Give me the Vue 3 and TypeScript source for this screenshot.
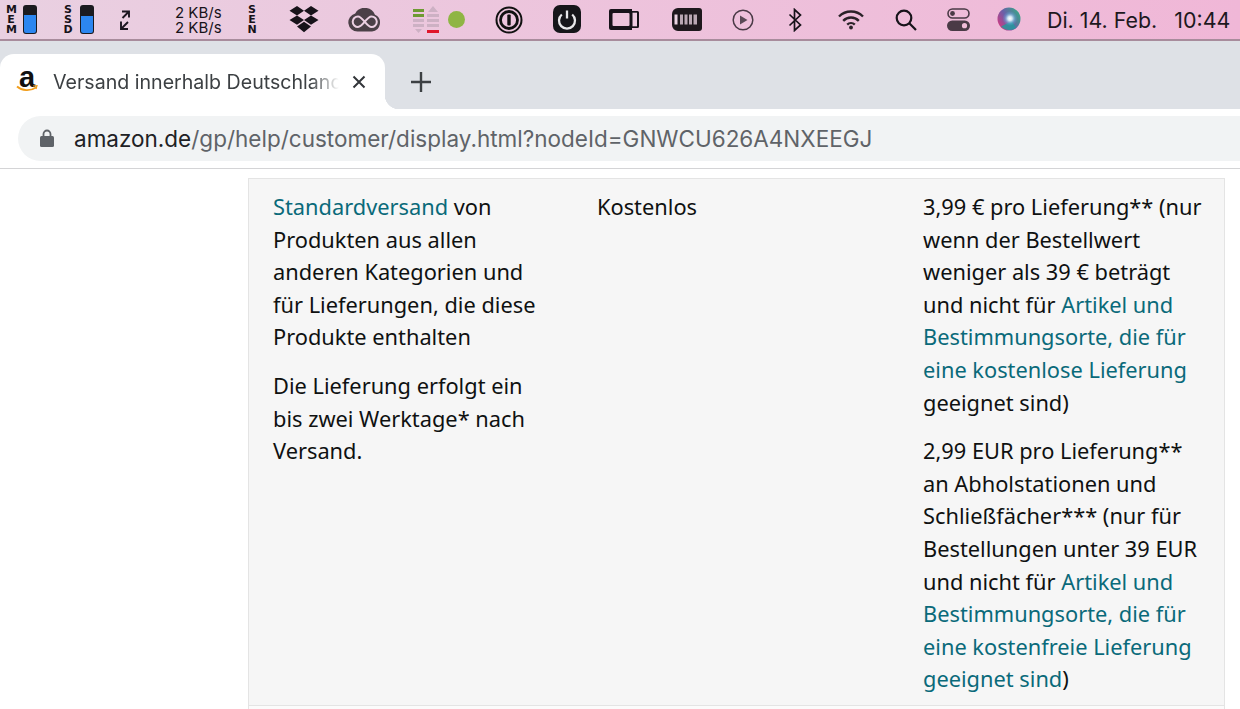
<script setup lang="ts">
const labels: Record<string, string> = { mem: 'MEM', ssd: 'SSD', sen: 'SEN' };
</script>

<template>
  <div class="screen">
    <header class="menubar">
      <div class="stack w-mem">{{ labels.mem }}</div>
      <div class="meter"><i class="fill-mem"></i></div>
      <div class="stack w-ssd">{{ labels.ssd }}</div>
      <div class="meter"><i class="fill-ssd"></i></div>
      <svg class="ic arrows" width="12" height="20" viewBox="0 0 12 20" fill="none" stroke="#1c1620" stroke-width="1.9">
        <path d="M3 1.5h7v6M10 1.5L3.5 8M9 12L2.500 18.500M2 11.500v7.500h7" />
      </svg>
      <div class="net">2 KB/s<br />2 KB/s</div>
      <div class="stack w-sen">{{ labels.sen }}</div>
      <svg class="ic dropbox" width="30" height="27" viewBox="0 0 30 27" fill="#17131a">
        <path d="M8 0l7 4.700-7 4.700-7.500-4.700zM22 0l7.500 4.700-7.500 4.700-7-4.700zM.5 14L8 9.400l7 4.600-7 4.800zM29.500 14L22 9.400 15 14l7 4.800zM8 20.500l7-4.700 7 4.700-7 5.800z" />
      </svg>
      <svg class="ic cc" width="33" height="24" viewBox="0 0 33 24" fill="none">
        <path d="M9.500 23.500a9.200 9.200 0 0 1-2.300-18.100A11 11 0 0 1 27 6.800 8.800 8.800 0 0 1 24 23.500z" fill="#4b4047" />
        <path d="M10 19a5.300 5.300 0 0 1 0-10.600c4.800 0 8.500 10.600 13.500 10.600a5.300 5.300 0 0 0 0-10.600C18.500 8.400 15 19 10 19z" stroke="#ecd0e2" stroke-width="2" />
      </svg>
      <svg class="ic bars" width="27" height="28" viewBox="0 0 27 28">
        <g fill="#cdb1c4">
          <rect x="0" y="8" width="11" height="3" fill="#6e9a32" />
          <rect x="0" y="3" width="11" height="3" fill="#6e9a32" />
          <path d="M0 13h11v3H0zM0 18h11v3H0zM2 23h7l-3.500 4zM14 8h12v3H14zM14 13h12v3H14zM14 18h12v3H14zM20 0l5 6H15z" />
          <rect x="14" y="24" width="12" height="3" fill="#e0162b" />
        </g>
      </svg>
      <span class="dot"></span>
      <svg class="ic onepass" width="28" height="28" viewBox="0 0 28 28">
        <circle cx="14" cy="14" r="12.500" fill="none" stroke="#111" stroke-width="2" />
        <circle cx="14" cy="14" r="8.500" fill="none" stroke="#111" stroke-width="2.800" />
        <rect x="12.300" y="8.500" width="3.400" height="11" rx="1" fill="#111" />
      </svg>
      <svg class="ic power" width="28" height="28" viewBox="0 0 28 28">
        <rect width="28" height="28" rx="7" fill="#16161a" />
        <path d="M8.800 9.500a8 8 0 1 0 10.400 0" fill="none" stroke="#e8e8ea" stroke-width="2.300" />
        <path d="M14 5.500v8" stroke="#e8e8ea" stroke-width="2.300" />
      </svg>
      <svg class="ic video" width="30" height="21" viewBox="0 0 30 21">
        <path d="M2 0h21v2h5.500a1.500 1.500 0 0 1 1.500 1.500v14a1.500 1.500 0 0 1-1.500 1.500H23v2H2a2 2 0 0 1-2-2V2a2 2 0 0 1 2-2z" fill="#17131a" />
        <rect x="3.500" y="4" width="17" height="13" rx="1" fill="#ecc4dc" />
        <rect x="23.500" y="3.700" width="4.500" height="13.600" fill="#efcde2" />
      </svg>
      <svg class="ic batt" width="30" height="23" viewBox="0 0 30 23">
        <path d="M6 0h21a3 3 0 0 1 3 3v17a3 3 0 0 1-3 3H6a6 6 0 0 1-6-6V6a6 6 0 0 1 6-6z" fill="#1e181d" />
        <path d="M2.500 6.500h3v10h-3z" fill="#ead3e2" />
        <path d="M8 6.500h3v10H8zM12.500 6.500h3v10h-3zM17 6.500h3v10h-3zM21.500 6.500h3.500v10h-3.500z" fill="#b9a7b3" />
      </svg>
      <svg class="ic play" width="22" height="22" viewBox="0 0 22 22">
        <circle cx="11" cy="11" r="9.800" fill="none" stroke="#4a3a46" stroke-width="1.500" />
        <path d="M8 6.500l7.500 4.500L8 15.500z" fill="#5a4a56" />
      </svg>
      <svg class="ic bt" width="14" height="24" viewBox="0 0 14 24" fill="none" stroke="#17131a" stroke-width="1.700">
        <path d="M1.500 6.500l11 10.500-6 5.500V1.500l6 5.500-11 10.500" />
      </svg>
      <svg class="ic wifi" width="26" height="20" viewBox="0 0 26 20" fill="none" stroke="#2a2228" stroke-width="2.400">
        <path d="M1 6.500a17 17 0 0 1 24 0M5.200 10.800a11 11 0 0 1 15.600 0M9.200 14.600a5.500 5.500 0 0 1 7.600 0" />
        <circle cx="13" cy="17.500" r="1.900" fill="#2a2228" stroke="none" />
      </svg>
      <svg class="ic search" width="22" height="22" viewBox="0 0 22 22" fill="none" stroke="#17131a" stroke-width="2.200">
        <circle cx="9" cy="9" r="7.300" />
        <path d="M14.300 14.300L21 21" />
      </svg>
      <svg class="ic ctrl" width="23" height="23" viewBox="0 0 23 23">
        <rect x="1" y="1" width="21" height="9" rx="4.500" fill="none" stroke="#4a3a46" stroke-width="1.600" />
        <circle cx="5.500" cy="5.500" r="2.400" fill="#4a3a46" />
        <rect y="12.500" width="23" height="10.500" rx="5.200" fill="#4a3a46" />
        <circle cx="17.500" cy="17.700" r="2.600" fill="#f0bcd8" />
      </svg>
      <svg class="ic siri" width="24" height="24" viewBox="0 0 24 24">
        <defs>
          <radialGradient id="siriCore" cx="50%" cy="50%" r="50%">
            <stop offset="0" stop-color="#ffffff" />
            <stop offset=".3" stop-color="#d6ecf5" stop-opacity=".95" />
            <stop offset=".7" stop-color="#6fb0de" stop-opacity=".4" />
            <stop offset="1" stop-color="#5aa6d8" stop-opacity="0" />
          </radialGradient>
          <linearGradient id="siriBase" x1="0" y1=".8" x2="1" y2=".2">
            <stop offset="0" stop-color="#d6387f" />
            <stop offset=".45" stop-color="#6a5fa8" />
            <stop offset="1" stop-color="#35a987" />
          </linearGradient>
        </defs>
        <circle cx="12" cy="12" r="11.500" fill="url(#siriBase)" />
        <path d="M4 19.500a11.500 11.500 0 0 0 15 1.500l-4-7z" fill="#1f9c9c" opacity=".8" />
        <circle cx="13" cy="11.500" r="7.500" fill="url(#siriCore)" />
      </svg>
      <div class="clock"><span>Di. 14. Feb.</span><span>10:44</span></div>
    </header>

    <div class="tabstrip">
      <div class="tab">
        <div class="favicon">
          <span>a</span>
          <svg width="22" height="8" viewBox="0 0 22 8" fill="none">
            <path d="M1 1.500c5 4.500 13 5 19 1" stroke="#f19e1d" stroke-width="1.800" />
            <path d="M17 1l4-.3-1 3.300" stroke="#f19e1d" stroke-width="1.200" />
          </svg>
        </div>
        <span class="tab-title">Versand innerhalb Deutschland</span>
        <svg class="tab-close" width="14" height="14" viewBox="0 0 14 14" stroke="#33363a" stroke-width="2">
          <path d="M1.500 1.500l11 11M12.500 1.500l-11 11" />
        </svg>
      </div>
      <svg class="plus" width="20" height="20" viewBox="0 0 20 20" stroke="#3c4043" stroke-width="2.400">
        <path d="M10 0v20M0 10h20" />
      </svg>
    </div>

    <div class="toolbar">
      <div class="omnibox">
        <svg class="lock" width="14" height="18" viewBox="0 0 14 18">
          <path d="M3.500 7V5a3.500 3.500 0 0 1 7 0v2" fill="none" stroke="#5f6368" stroke-width="1.800" />
          <rect y="7" width="14" height="11" rx="1.500" fill="#5f6368" />
        </svg>
        <span class="url"><b>amazon.de</b>/gp/help/customer/display.html?nodeId=GNWCU626A4NXEEGJ</span>
      </div>
    </div>

    <main class="page">
      <section class="row">
        <div class="cell">
          <p><a>Standardversand</a> von<br />Produkten aus allen<br />anderen Kategorien und<br />für Lieferungen, die diese<br />Produkte enthalten</p>
          <p>Die Lieferung erfolgt ein<br />bis zwei Werktage* nach<br />Versand.</p>
        </div>
        <div class="cell">
          <p>Kostenlos</p>
        </div>
        <div class="cell">
          <p>3,99 € pro Lieferung** (nur<br />wenn der Bestellwert<br />weniger als 39 € beträgt<br />und nicht für <a>Artikel und<br />Bestimmungsorte, die für<br />eine kostenlose Lieferung</a><br />geeignet sind)</p>
          <p>2,99 EUR pro Lieferung**<br />an Abholstationen und<br />Schließfächer*** (nur für<br />Bestellungen unter 39 EUR<br />und nicht für <a>Artikel und<br />Bestimmungsorte, die für<br />eine kostenfreie Lieferung<br />geeignet sind</a>)</p>
        </div>
      </section>
      <div class="row-next"></div>
    </main>
  </div>
</template>

<style>
html, body { margin: 0; background: #fff; overflow: hidden; }
</style>

<style scoped>
.screen {
  width: 1240px;
  height: 709px;
  overflow: hidden;
  display: flex;
  flex-direction: column;
  background: #fff;
  font-family: Inter, "Liberation Sans", sans-serif;
}
.menubar {
  height: 39px;
  box-sizing: content-box;
  flex: none;
  display: flex;
  align-items: center;
  padding-left: 6px;
  background: linear-gradient(90deg, #e9d0e1 0%, #edc3dc 50%, #f0b7d7 100%);
  border-bottom: 2px solid #a88c9c;
  color: #17131a;
}
.stack {
  width: 10px;
  flex: none;
  font: 700 11px/10px "DejaVu Sans", sans-serif;
  word-break: break-all;
  text-align: center;
}
.w-mem { margin-right: 7px; }
.w-ssd { margin-left: 26px; margin-right: 7px; }
.w-sen { margin-left: 26px; }
.meter {
  width: 14px;
  height: 29px;
  box-sizing: border-box;
  border-radius: 3px;
  background: #1b1a1f;
  display: flex;
  align-items: flex-end;
  padding: 1px;
}
.meter i { display: block; width: 100%; background: #2c86f0; border-radius: 0 0 2px 2px; }
.fill-mem { height: 18px; }
.fill-ssd { height: 17px; }
.ic { flex: none; display: block; }
.arrows { margin-left: 25px; }
.net {
  width: 46px;
  margin-left: 44px;
  font-size: 15px;
  line-height: 15px;
  white-space: nowrap;
  text-align: right;
}
.dropbox { margin-left: 32px; }
.cc { margin-left: 29px; }
.bars { margin-left: 32px; }
.dot { flex: none; width: 17px; height: 17px; border-radius: 50%; background: #8fb544; margin-left: 8px; }
.onepass { margin-left: 30px; }
.power { margin-left: 30px; margin-top: -1px; }
.video { margin-left: 28px; }
.batt { margin-left: 33px; }
.play { margin-left: 30px; }
.bt { margin-left: 34px; }
.wifi { margin-left: 36px; }
.search { margin-left: 31px; }
.ctrl { margin-left: 30px; }
.siri { margin-left: 27px; margin-top: -2px; }
.clock {
  margin-left: 26px;
  display: flex;
  gap: 17px;
  font-size: 21.400px;
  white-space: nowrap;
  color: #1d1820;
}
.tabstrip {
  height: 68px;
  flex: none;
  background: #dee1e6;
  display: flex;
  align-items: flex-end;
}
.tab {
  position: relative;
  width: 385px;
  height: 55px;
  box-sizing: border-box;
  background: #fff;
  border-radius: 14px 14px 0 0;
  display: flex;
  align-items: center;
  padding: 0 18px 0 16px;
}
.tab::after {
  content: "";
  position: absolute;
  right: -14px;
  bottom: 0;
  width: 14px;
  height: 14px;
  background: radial-gradient(circle at 100% 0, transparent 14px, #fff 14.500px);
}
.favicon {
  position: relative;
  width: 22px;
  height: 28px;
  flex: none;
  display: flex;
  justify-content: center;
}
.favicon span {
  font: 700 29px/24px "Liberation Sans", sans-serif;
  margin-top: -3px;
  color: #111;
}
.favicon svg { position: absolute; left: 0; bottom: 3px; }
.tab-title {
  width: 286px;
  margin-left: 15px;
  font-size: 19.600px;
  line-height: 26px;
  white-space: nowrap;
  overflow: hidden;
  color: #3c4043;
  -webkit-mask-image: linear-gradient(90deg, #000 90%, transparent 100%);
  mask-image: linear-gradient(90deg, #000 90%, transparent 100%);
}
.tab-close { flex: none; margin-left: 13px; }
.plus { margin: 0 0 17px 26px; }
.toolbar {
  height: 59px;
  flex: none;
  box-sizing: content-box;
  background: #fff;
  border-bottom: 1px solid #d4d4d6;
  padding-left: 18px;
  display: flex;
  align-items: center;
}
.omnibox {
  width: 1260px;
  height: 45px;
  flex: none;
  border-radius: 23px;
  background: #f1f3f4;
  display: flex;
  align-items: center;
  padding-left: 22px;
  margin-top: -1px;
}
.lock { flex: none; }
.url {
  margin-left: 20px;
  font-size: 22.500px;
  white-space: nowrap;
  color: #5f6368;
}
.url b { font-weight: 400; color: #202124; }
.page {
  flex: 1;
  min-height: 0;
  display: flex;
  flex-direction: column;
  padding: 9px 15px 0 248px;
  background: #fff;
}
.row {
  height: 526px;
  flex: none;
  box-sizing: content-box;
  display: grid;
  grid-template-columns: 324px 326px 1fr;
  background: #f6f6f6;
  border: 1px solid #e4e4e4;
  font-family: "Noto Sans", sans-serif;
  font-size: 21.800px;
  line-height: 32.600px;
  color: #0f1111;
}
.row-next {
  flex: 1;
  background: #fbfbfb;
  border: solid #e4e4e4;
  border-width: 0 1px;
}
.cell { padding: 12px 0 0 24px; white-space: nowrap; }
.cell p { margin: 0 0 16px; }
.cell a { color: #0a6a7a; }
</style>
